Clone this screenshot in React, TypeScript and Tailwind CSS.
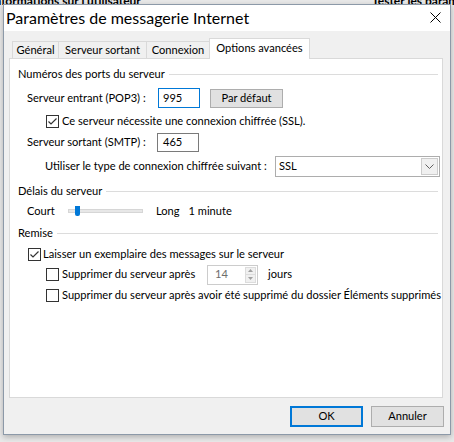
import React from 'react'

const font = { fontFamily: 'Lato, "Liberation Sans", sans-serif' }

function Check({ checked }: { checked?: boolean }) {
    return (
        <span className="flex h-[13px] w-[13px] shrink-0 items-center justify-center border border-[#333333] bg-white">
            {checked && (
                <svg width="11" height="11" viewBox="0 0 11 11">
                    <polyline points="1.5,5.5 4,8 9.5,2.5" fill="none" stroke="#333333" strokeWidth="1.2" />
                </svg>
            )}
        </span>
    )
}

function GroupHeader({ title, className }: { title: string; className?: string }) {
    return (
        <div className={'flex h-[16px] items-center pl-[8px] pr-[4px] ' + (className || '')}>
            <span>{title}</span>
            <span className="ml-[4px] h-px flex-1 bg-[#dcdcdc]" />
        </div>
    )
}

export default function App() {
    return (
        <div className="relative h-[442px] w-[454px] overflow-hidden bg-[#e9e9e9] text-[11.1px] text-black" style={font}>
            {/* what lies behind the dialog */}
            <div className="absolute left-[-9px] top-[-8px] whitespace-nowrap text-[12px] font-bold">Informations sur l'utilisateur</div>
            <div className="absolute left-[372px] top-[-8px] whitespace-nowrap text-[12px] font-bold">Tester les paramètres</div>

            {/* dialog window */}
            <div className="relative z-10 ml-[3px] mt-[4px] flex h-[431px] w-[448px] flex-col border border-[#8c99a8] bg-[#f0f0f0] shadow-[0_2px_6px_rgba(0,0,0,0.25)]">
                <div className="flex h-[26px] items-center justify-between bg-white pl-[2px] pr-[9px]">
                    <span className="text-[16px] leading-none">Paramètres de messagerie Internet</span>
                    <svg width="11" height="11" viewBox="0 0 11 11" className="mt-[-2px]">
                        <path d="M0.5 0.5 L10.5 10.5 M10.5 0.5 L0.5 10.5" stroke="#000" strokeWidth="1" />
                    </svg>
                </div>

                <div className="flex flex-col pl-[5px] pt-[7px]">
                    {/* tabs */}
                    <div className="flex h-[20px] items-end pl-[3px]">
                        <div className="flex h-[17px] w-[47px] items-center justify-center border border-b-0 border-[#d9d9d9]">Général</div>
                        <div className="-ml-px flex h-[17px] w-[89px] items-center justify-center border border-b-0 border-[#d9d9d9]">Serveur sortant</div>
                        <div className="-ml-px flex h-[17px] w-[64px] items-center justify-center border border-b-0 border-[#d9d9d9]">Connexion</div>
                        <div className="relative z-10 -mb-px -ml-px flex h-[21px] w-[101px] items-center justify-center border border-b-0 border-[#d9d9d9] bg-white pb-[2px]">Options avancées</div>
                    </div>

                    {/* panel */}
                    <div className="flex h-[340px] w-[434px] flex-col border border-[#d9d9d9] bg-white">
                        <GroupHeader title="Numéros des ports du serveur" className="mt-[7px]" />

                        <div className="mt-[6px] flex h-[20px] items-center pl-[17px]">
                            <span className="w-[131px] whitespace-nowrap">Serveur entrant (POP3) :</span>
                            <div className="flex h-[20px] w-[42px] items-center border border-[#0078d7] pl-[4px]">995</div>
                            <button className="ml-[10px] h-[19px] w-[73px] border border-[#adadad] bg-[#e1e1e1]">Par défaut</button>
                        </div>

                        <div className="mt-[5px] flex h-[16px] items-center gap-[3px] pl-[36px]">
                            <Check checked />
                            <span className="whitespace-nowrap">Ce serveur nécessite une connexion chiffrée (SSL).</span>
                        </div>

                        <div className="mt-[3px] flex h-[20px] items-center pl-[17px]">
                            <span className="w-[130px] whitespace-nowrap">Serveur sortant (SMTP) :</span>
                            <div className="flex h-[19px] w-[42px] items-center border border-[#7a7a7a] pl-[5px]">465</div>
                        </div>

                        <div className="mt-[4px] flex h-[21px] items-center pl-[35px]">
                            <span className="w-[230px] whitespace-nowrap">Utiliser le type de connexion chiffrée suivant :</span>
                            <div className="flex h-[21px] w-[165px] items-center justify-between border border-[#adadad] bg-white pl-[3px] pr-px">
                                <span>SSL</span>
                                <span className="flex h-[17px] w-[17px] items-center justify-center border border-[#cccccc] bg-[#f0f0f0]">
                                    <svg width="9" height="5" viewBox="0 0 9 5">
                                        <polyline points="0.5,0.5 4.5,4.5 8.5,0.5" fill="none" stroke="#606060" strokeWidth="1" />
                                    </svg>
                                </span>
                            </div>
                        </div>

                        <GroupHeader title="Délais du serveur" className="mt-[6px]" />

                        <div className="mt-[4px] flex h-[16px] items-center pl-[17px]">
                            <span className="w-[41px]">Court</span>
                            <div className="relative h-[4px] w-[75px] border border-[#d6d6d6] bg-[#e7e7e7]">
                                <span className="absolute left-[6px] top-[-4px] h-[10px] w-[5px] rounded-b-[2px] bg-[#0078d7]" />
                            </div>
                            <span className="ml-[13px]">Long</span>
                            <span className="ml-[9px]">1 minute</span>
                        </div>

                        <GroupHeader title="Remise" className="mt-[6px]" />

                        <div className="mt-[5px] flex h-[16px] items-center gap-[2px] pl-[18px]">
                            <Check checked />
                            <span className="whitespace-nowrap">Laisser un exemplaire des messages sur le serveur</span>
                        </div>

                        <div className="mt-[2px] flex h-[21px] items-center pl-[36px]">
                            <Check />
                            <span className="ml-[3px] w-[145px] whitespace-nowrap">Supprimer du serveur après</span>
                            <div className="flex h-[20px] w-[51px] items-center justify-between border border-[#cccccc] bg-white pl-[7px] pr-px">
                                <span className="text-[#6d6d6d]">14</span>
                                <span className="flex h-[16px] w-[11px] flex-col border border-[#dcdcdc] bg-[#f0f0f0]">
                                    <span className="flex flex-1 items-center justify-center border-b border-[#dcdcdc]">
                                        <svg width="5" height="3" viewBox="0 0 5 3"><polygon points="0,3 2.5,0 5,3" fill="#a0a0a0" /></svg>
                                    </span>
                                    <span className="flex flex-1 items-center justify-center">
                                        <svg width="5" height="3" viewBox="0 0 5 3"><polygon points="0,0 2.5,3 5,0" fill="#a0a0a0" /></svg>
                                    </span>
                                </span>
                            </div>
                            <span className="ml-[10px]">jours</span>
                        </div>

                        <div className="mt-[2px] flex h-[16px] items-center gap-[3px] pl-[36px]">
                            <Check />
                            <span className="whitespace-nowrap">Supprimer du serveur après avoir été supprimé du dossier Éléments supprimés</span>
                        </div>
                    </div>

                    {/* buttons */}
                    <div className="mr-[6px] mt-[8px] flex justify-end gap-[8px]">
                        <button className="h-[21px] w-[73px] border-2 border-[#0078d7] bg-[#e1e1e1]">OK</button>
                        <button className="h-[21px] w-[73px] border border-[#adadad] bg-[#e1e1e1]">Annuler</button>
                    </div>
                </div>
            </div>
        </div>
    )
}
